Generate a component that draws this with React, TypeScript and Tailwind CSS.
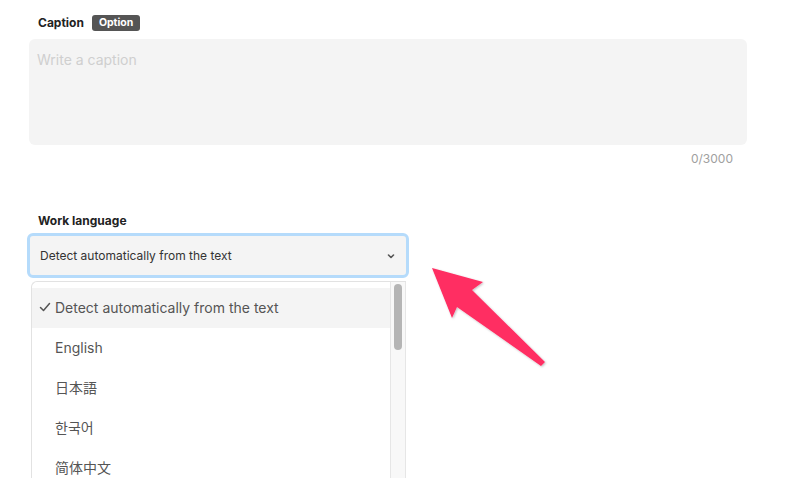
import React from 'react';

const font = { fontFamily: 'Inter, "Noto Sans CJK JP", "Noto Sans CJK KR", sans-serif' };

const languages = ['Detect automatically from the text', 'English', '日本語', '한국어', '简体中文'];

const App: React.FC = () => {
  return (
    <div className="relative w-[793px] h-[478px] overflow-hidden bg-white" style={font}>
      <div className="pl-[29px] pt-[15px]">
        {/* Caption */}
        <div className="ml-[9px] flex items-center gap-[8px] h-[16px]">
          <span className="text-[12px] font-bold text-[#222]">Caption</span>
          <span className="bg-[#555] text-white text-[10.5px] font-bold rounded-[3px] px-[7px] h-[16px] leading-[16px]">
            Option
          </span>
        </div>
        <div className="mt-[8px] w-[718px] h-[106px] bg-[#f4f4f4] rounded-[6px] px-[8px] pt-[8px]">
          <span className="text-[14px] text-[#cfcfcf]">Write a caption</span>
        </div>
        <div className="w-[718px] text-right pr-[14px] mt-[5px] text-[12px] text-[#a0a0a0]">0/3000</div>

        {/* Work language */}
        <div className="ml-[9px] mt-[44px] text-[12px] font-bold text-[#222] h-[16px]">Work language</div>
        <div className="ml-[-2px] mt-[5px] w-[382px] h-[45px] rounded-[6px] border-[3px] border-[#b5dbfb] bg-[#f4f4f4] flex items-center justify-between pl-[10px] pr-[10px]">
          <span className="text-[12px] text-[#333]">Detect automatically from the text</span>
          <svg width="10" height="10" viewBox="0 0 10 10">
            <path d="M2.5 4 L5 6.5 L7.5 4" fill="none" stroke="#555" strokeWidth="1.6" strokeLinecap="round" strokeLinejoin="round" />
          </svg>
        </div>

        {/* Dropdown */}
        <div className="ml-[2px] mt-[3px] w-[375px] h-[200px] border-l border-t border-[#e2e2e2] rounded-tl-[6px] flex overflow-hidden">
          <div className="flex-1 pt-[6px]">
            {languages.map((lang, i) => (
              <div
                key={lang}
                className={`h-[40px] flex items-center pl-[7px] pb-[2px] text-[14px] text-[#555] ${i === 0 ? 'bg-[#f4f4f4]' : ''}`}
              >
                <span className="w-[16px] flex items-center">
                  {i === 0 && (
                    <svg width="12" height="12" viewBox="0 0 12 12">
                      <path d="M1.5 6.5 L4.5 9.5 L10.5 2.5" fill="none" stroke="#555" strokeWidth="1.5" strokeLinecap="round" strokeLinejoin="round" />
                    </svg>
                  )}
                </span>
                {lang}
              </div>
            ))}
          </div>
          <div className="w-[16px] bg-[#f8f8f8] border-l border-r border-[#e6e6e6] flex justify-center pt-[2px]">
            <div className="w-[8px] h-[66px] rounded-full bg-[#b5b5b5]" />
          </div>
        </div>
      </div>

      {/* Pointer arrow */}
      <svg className="absolute left-0 top-0 pointer-events-none" width="793" height="478">
        <defs>
          <filter id="sh" x="-20%" y="-20%" width="140%" height="140%">
            <feDropShadow dx="1" dy="1" stdDeviation="1" floodColor="#000" floodOpacity="0.25" />
          </filter>
        </defs>
        <polygon
          points="432,268 483,282 472,290 545,362 541,366 457,307 452,318"
          fill="#ff2d62"
          filter="url(#sh)"
        />
      </svg>
    </div>
  );
};

export default App;
